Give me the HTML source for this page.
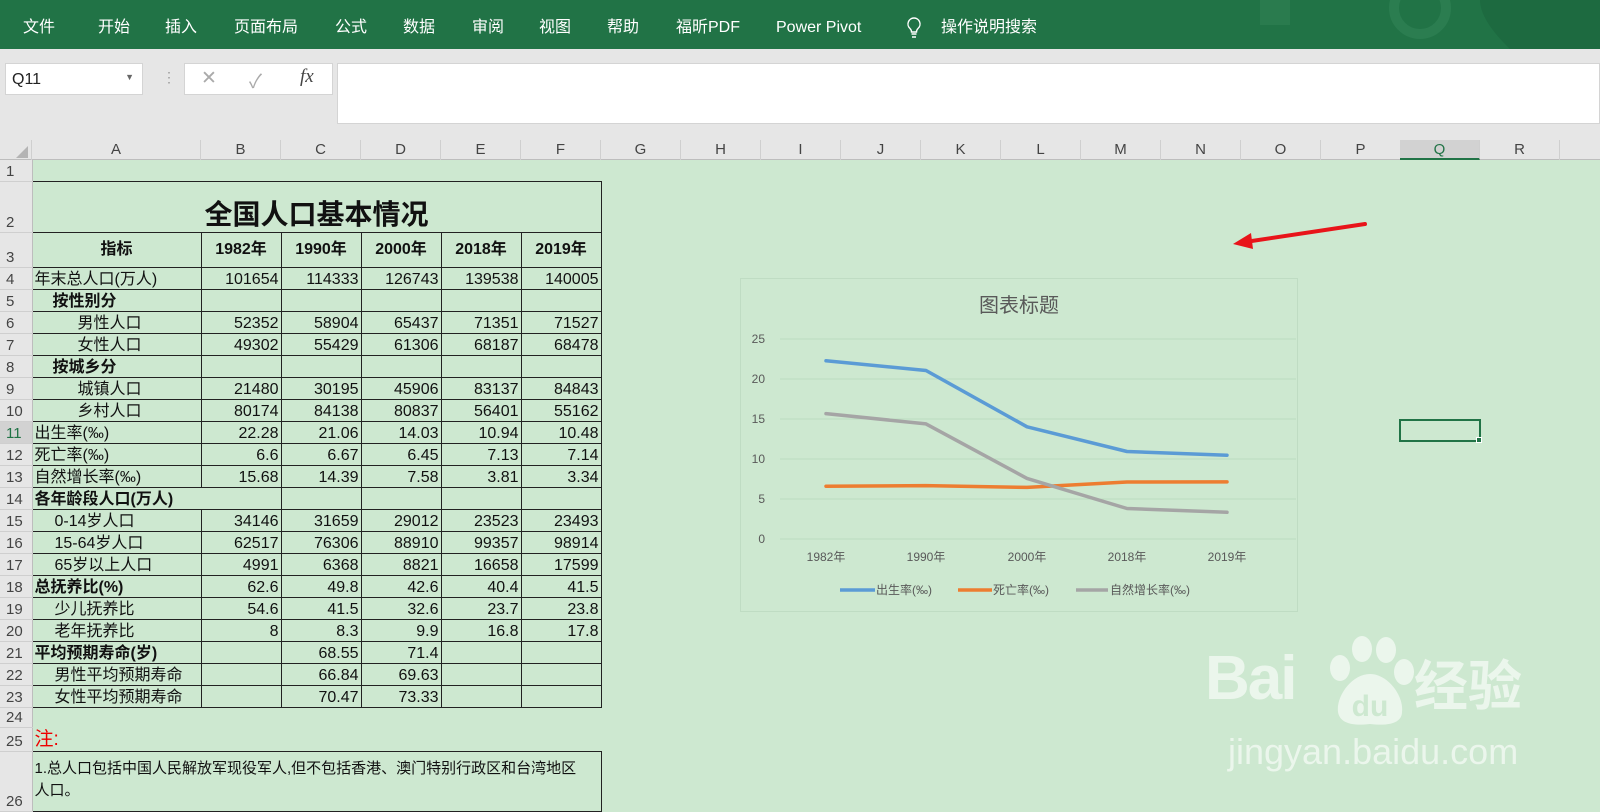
<!DOCTYPE html>
<html><head><meta charset="utf-8"><style>
*{margin:0;padding:0;box-sizing:border-box}
body{width:1600px;height:808px;overflow:hidden;background:#cde8d0;font-family:"Liberation Sans","Noto Sans CJK SC",sans-serif;position:relative}
.rib{position:absolute;left:0;top:0;width:1600px;height:49px;background:#217346;color:#fff;font-size:16px}
.rib span{position:absolute;top:17px;height:22px;line-height:22px;white-space:nowrap}
.fb{position:absolute;left:0;top:49px;width:1600px;height:91px;background:#e6e6e6}
.box{position:absolute;background:#fff;border:1px solid #d4d4d4}
.ch{position:absolute;top:140px;left:0;width:1600px;height:20px;background:#e6e6e6;border-bottom:1px solid #bdbdbd}
.ch div{position:absolute;top:0;height:20px;width:80px;text-align:center;font-size:15px;color:#444;line-height:20px;border-right:1px solid #cfcfcf}
table{position:absolute;left:0;top:160px;border-collapse:collapse;table-layout:fixed;font-size:16px;color:#111}
td{padding:0 2px;white-space:nowrap;overflow:hidden;line-height:18px;vertical-align:bottom}
td.rh{background:#e6e6e6;color:#444;font-size:15px;text-align:left;padding-left:6px;border-bottom:1px solid #cfcfcf;border-right:1px solid #bdbdbd}
td.b{border:1px solid #222}
.r{text-align:right}.c{text-align:center}.bo{font-weight:bold}
.wm{color:rgba(255,255,255,.6)}
</style></head><body>
<div class="rib">
<span style="left:23px">文件</span><span style="left:98px">开始</span><span style="left:165px">插入</span><span style="left:234px">页面布局</span><span style="left:335px">公式</span><span style="left:403px">数据</span><span style="left:472px">审阅</span><span style="left:539px">视图</span><span style="left:607px">帮助</span><span style="left:676px">福昕PDF</span><span style="left:776px">Power Pivot</span>
<svg style="position:absolute;left:905px;top:16px" width="18" height="24" viewBox="0 0 18 24"><path d="M9 2a6 6 0 0 0-4 10.5c1 1 1.5 2 1.5 3.5h5c0-1.5.5-2.5 1.5-3.5A6 6 0 0 0 9 2z M6.5 18h5 M7 21h4" fill="none" stroke="#fff" stroke-width="1.4"/></svg>
<span style="left:941px">操作说明搜索</span>
<svg style="position:absolute;left:1180px;top:0" width="420" height="49"><circle cx="240" cy="8" r="26" fill="none" stroke="#2b7d50" stroke-width="10"/><path d="M300 0 L420 0 L420 49 L330 49 Q300 20 300 0z" fill="#1d6a40"/><rect x="80" y="0" width="30" height="25" fill="#2a7b4e"/></svg>
</div>
<div class="fb">
<div class="box" style="left:5px;top:14px;width:138px;height:32px;font-size:16px;padding:7px 6px;color:#222">Q11<span style="position:absolute;right:8px;top:8px;font-size:9px;color:#666">▼</span></div>
<div style="position:absolute;left:162px;top:20px;color:#999;font-size:14px">⋮</div>
<div class="box" style="left:184px;top:14px;width:149px;height:32px;color:#aaa;font-size:19px"><span style="position:absolute;left:16px;top:3px">✕</span><span style="position:absolute;left:64px;top:3px">✓</span><span style="position:absolute;left:115px;top:2px;color:#444;font-style:italic;font-family:'Liberation Serif',serif">fx</span></div>
<div class="box" style="left:337px;top:14px;width:1263px;height:61px"></div>
</div>
<div class="ch">
<div style="left:0;width:32px"><svg width="32" height="20"><path d="M28 6 L28 18 L16 18z" fill="#b4b4b4"/></svg></div>
<div style="left:32px;width:169px">A</div>
<div style="left:201px">B</div><div style="left:281px">C</div><div style="left:361px">D</div><div style="left:441px">E</div><div style="left:521px">F</div><div style="left:601px">G</div><div style="left:681px">H</div><div style="left:761px">I</div><div style="left:841px">J</div><div style="left:921px">K</div><div style="left:1001px">L</div><div style="left:1081px">M</div><div style="left:1161px">N</div><div style="left:1241px">O</div><div style="left:1321px">P</div><div style="left:1400px;background:#d2d2d2;border-bottom:2px solid #217346;color:#217346">Q</div><div style="left:1480px">R</div>
</div>
<table>
<colgroup><col style="width:32px"><col style="width:169px"><col style="width:80px"><col style="width:80px"><col style="width:80px"><col style="width:80px"><col style="width:80px"></colgroup>
<tr style="height:21px"><td class="rh">1</td><td colspan="6"></td></tr>
<tr style="height:51px"><td class="rh">2</td><td class="b c bo" colspan="6" style="font-size:28px;line-height:34px">全国人口基本情况</td></tr>
<tr style="height:35px"><td class="rh">3</td><td class="b c bo" style="vertical-align:middle">指标</td><td class="b c bo" style="vertical-align:middle">1982年</td><td class="b c bo" style="vertical-align:middle">1990年</td><td class="b c bo" style="vertical-align:middle">2000年</td><td class="b c bo" style="vertical-align:middle">2018年</td><td class="b c bo" style="vertical-align:middle">2019年</td></tr>
<tr style="height:22px"><td class="rh">4</td><td class="b">年末总人口(万人)</td><td class="b r">101654</td><td class="b r">114333</td><td class="b r">126743</td><td class="b r">139538</td><td class="b r">140005</td></tr>
<tr style="height:22px"><td class="rh">5</td><td class="b bo" style="padding-left:20px">按性别分</td><td class="b"></td><td class="b"></td><td class="b"></td><td class="b"></td><td class="b"></td></tr>
<tr style="height:22px"><td class="rh">6</td><td class="b" style="padding-left:45px">男性人口</td><td class="b r">52352</td><td class="b r">58904</td><td class="b r">65437</td><td class="b r">71351</td><td class="b r">71527</td></tr>
<tr style="height:22px"><td class="rh">7</td><td class="b" style="padding-left:45px">女性人口</td><td class="b r">49302</td><td class="b r">55429</td><td class="b r">61306</td><td class="b r">68187</td><td class="b r">68478</td></tr>
<tr style="height:22px"><td class="rh">8</td><td class="b bo" style="padding-left:20px">按城乡分</td><td class="b"></td><td class="b"></td><td class="b"></td><td class="b"></td><td class="b"></td></tr>
<tr style="height:22px"><td class="rh">9</td><td class="b" style="padding-left:45px">城镇人口</td><td class="b r">21480</td><td class="b r">30195</td><td class="b r">45906</td><td class="b r">83137</td><td class="b r">84843</td></tr>
<tr style="height:22px"><td class="rh">10</td><td class="b" style="padding-left:45px">乡村人口</td><td class="b r">80174</td><td class="b r">84138</td><td class="b r">80837</td><td class="b r">56401</td><td class="b r">55162</td></tr>
<tr style="height:22px"><td class="rh" style="background:#d2d2d2;color:#217346">11</td><td class="b">出生率(‰)</td><td class="b r">22.28</td><td class="b r">21.06</td><td class="b r">14.03</td><td class="b r">10.94</td><td class="b r">10.48</td></tr>
<tr style="height:22px"><td class="rh">12</td><td class="b">死亡率(‰)</td><td class="b r">6.6</td><td class="b r">6.67</td><td class="b r">6.45</td><td class="b r">7.13</td><td class="b r">7.14</td></tr>
<tr style="height:22px"><td class="rh">13</td><td class="b">自然增长率(‰)</td><td class="b r">15.68</td><td class="b r">14.39</td><td class="b r">7.58</td><td class="b r">3.81</td><td class="b r">3.34</td></tr>
<tr style="height:22px"><td class="rh">14</td><td class="b bo" colspan="2">各年龄段人口(万人)</td><td class="b"></td><td class="b"></td><td class="b"></td><td class="b"></td></tr>
<tr style="height:22px"><td class="rh">15</td><td class="b" style="padding-left:22px">0-14岁人口</td><td class="b r">34146</td><td class="b r">31659</td><td class="b r">29012</td><td class="b r">23523</td><td class="b r">23493</td></tr>
<tr style="height:22px"><td class="rh">16</td><td class="b" style="padding-left:22px">15-64岁人口</td><td class="b r">62517</td><td class="b r">76306</td><td class="b r">88910</td><td class="b r">99357</td><td class="b r">98914</td></tr>
<tr style="height:22px"><td class="rh">17</td><td class="b" style="padding-left:22px">65岁以上人口</td><td class="b r">4991</td><td class="b r">6368</td><td class="b r">8821</td><td class="b r">16658</td><td class="b r">17599</td></tr>
<tr style="height:22px"><td class="rh">18</td><td class="b bo">总抚养比(%)</td><td class="b r">62.6</td><td class="b r">49.8</td><td class="b r">42.6</td><td class="b r">40.4</td><td class="b r">41.5</td></tr>
<tr style="height:22px"><td class="rh">19</td><td class="b" style="padding-left:22px">少儿抚养比</td><td class="b r">54.6</td><td class="b r">41.5</td><td class="b r">32.6</td><td class="b r">23.7</td><td class="b r">23.8</td></tr>
<tr style="height:22px"><td class="rh">20</td><td class="b" style="padding-left:22px">老年抚养比</td><td class="b r">8</td><td class="b r">8.3</td><td class="b r">9.9</td><td class="b r">16.8</td><td class="b r">17.8</td></tr>
<tr style="height:22px"><td class="rh">21</td><td class="b bo">平均预期寿命(岁)</td><td class="b"></td><td class="b r">68.55</td><td class="b r">71.4</td><td class="b"></td><td class="b"></td></tr>
<tr style="height:22px"><td class="rh">22</td><td class="b" style="padding-left:22px">男性平均预期寿命</td><td class="b"></td><td class="b r">66.84</td><td class="b r">69.63</td><td class="b"></td><td class="b"></td></tr>
<tr style="height:22px"><td class="rh">23</td><td class="b" style="padding-left:22px">女性平均预期寿命</td><td class="b"></td><td class="b r">70.47</td><td class="b r">73.33</td><td class="b"></td><td class="b"></td></tr>
<tr style="height:20px"><td class="rh">24</td><td colspan="6"></td></tr>
<tr style="height:24px"><td class="rh">25</td><td colspan="6" style="color:#e00;font-size:19px;line-height:22px">注:</td></tr>
<tr style="height:60px"><td class="rh">26</td><td class="b" colspan="6" style="font-size:15px;white-space:normal;vertical-align:top;padding-top:6px;line-height:22px;padding-right:14px">1.总人口包括中国人民解放军现役军人,但不包括香港、澳门特别行政区和台湾地区人口。</td></tr>
</table>
<div style="position:absolute;left:1399px;top:419px;width:82px;height:23px;border:2px solid #217346"></div>
<div style="position:absolute;left:1476px;top:437px;width:6px;height:6px;background:#217346;border:1px solid #fff"></div>
<svg style="position:absolute;left:1225px;top:215px" width="150" height="40"><path d="M140 9 L20 27" stroke="#e8141a" stroke-width="4" stroke-linecap="round"/><path d="M8 29 L26 18 L28 34z" fill="#e8141a"/></svg>
<svg style="position:absolute;left:740px;top:278px" width="558" height="334" font-family="Liberation Sans,Noto Sans CJK SC,sans-serif">
<rect x="0.5" y="0.5" width="557" height="333" fill="#cde8d0" stroke="#bfdcc3"/>
<text x="279" y="34" text-anchor="middle" font-size="20" fill="#595959">图表标题</text>
<g stroke="#bcdcc0" stroke-width="1"><path d="M40 61H556M40 101H556M40 141H556M40 181H556M40 221H556M40 261H556"/></g>
<g font-size="12" fill="#595959" text-anchor="end"><text x="25" y="65">25</text><text x="25" y="105">20</text><text x="25" y="145">15</text><text x="25" y="185">10</text><text x="25" y="225">5</text><text x="25" y="265">0</text></g>
<g font-size="12" fill="#595959" text-anchor="middle"><text x="86" y="283">1982年</text><text x="186" y="283">1990年</text><text x="287" y="283">2000年</text><text x="387" y="283">2018年</text><text x="487" y="283">2019年</text></g>
<g fill="none" stroke-width="3.5" stroke-linejoin="round" stroke-linecap="round">
<polyline points="86,82.8 186,92.5 287,148.8 387,173.5 487,177.2" stroke="#5b9bd5"/>
<polyline points="86,208.2 186,207.6 287,209.4 387,204 487,203.9" stroke="#ed7d31"/>
<polyline points="86,135.6 186,145.9 287,200.4 387,230.5 487,234.3" stroke="#a5a5a5"/>
</g>
<g stroke-width="3.5"><path d="M100 312H135" stroke="#5b9bd5"/><path d="M218 312H252" stroke="#ed7d31"/><path d="M336 312H368" stroke="#a5a5a5"/></g>
<g font-size="12" fill="#595959"><text x="136" y="316">出生率(‰)</text><text x="253" y="316">死亡率(‰)</text><text x="370" y="316">自然增长率(‰)</text></g>
</svg>
<div class="wm" style="position:absolute;left:1205px;top:648px;font-size:62px;font-weight:bold;letter-spacing:-2px;line-height:62px">Bai</div>
<svg style="position:absolute;left:1322px;top:636px" width="110" height="95"><g fill="rgba(255,255,255,.6)"><ellipse cx="18" cy="32" rx="10" ry="13"/><ellipse cx="40" cy="13" rx="10" ry="13"/><ellipse cx="64" cy="14" rx="10" ry="13"/><ellipse cx="82" cy="36" rx="10" ry="13"/><path d="M48 38 C30 38 14 60 16 76 C18 88 32 90 48 88 C64 90 80 88 80 76 C82 60 66 38 48 38z"/></g><text x="48" y="80" text-anchor="middle" font-size="30" font-weight="bold" fill="#cde8d0" font-family="Liberation Sans">du</text></svg>
<div class="wm" style="position:absolute;left:1414px;top:652px;font-size:54px;font-weight:bold;line-height:60px;font-family:'Noto Sans CJK SC',sans-serif">经验</div>
<div class="wm" style="position:absolute;left:1228px;top:732px;font-size:36px;line-height:40px">jingyan.baidu.com</div>
</body></html>
